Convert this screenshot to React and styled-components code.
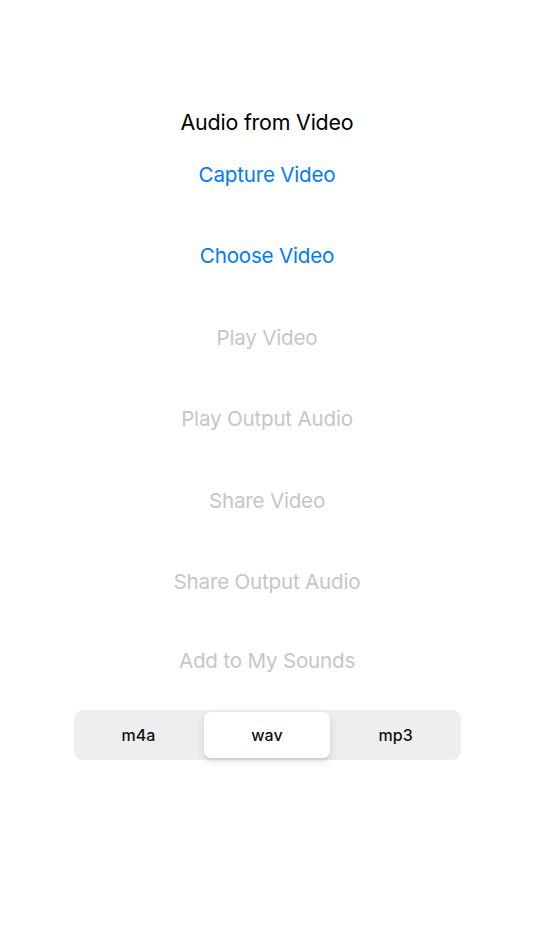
import { useState } from "react";
import styled, { createGlobalStyle } from "styled-components";

const GlobalStyle = createGlobalStyle`
  body {
    margin: 0;
    background: #ffffff;
    font-family: Inter, "Liberation Sans", sans-serif;
    -webkit-font-smoothing: antialiased;
  }
`;

const Screen = styled.div`
  width: 534px;
  height: 950px;
  display: flex;
  flex-direction: column;
  align-items: center;
  padding-top: 109px;
  box-sizing: border-box;
`;

const Title = styled.h1`
  margin: 0;
  font-size: 21.4px;
  line-height: 26px;
  font-weight: 400;
  color: #000000;
  letter-spacing: -0.2px;
`;

const ButtonList = styled.div`
  display: flex;
  flex-direction: column;
  align-items: center;
  gap: 37.5px;
  margin-top: 17px;
`;

const ActionButton = styled.button`
  height: 44px;
  border: none;
  background: none;
  padding: 0 8px;
  font-family: inherit;
  font-size: 20.6px;
  font-weight: 400;
  letter-spacing: -0.2px;
  color: ${(p) => (p.disabled ? "#c6c6c8" : "#007aff")};
  margin-top: ${(p) => (p.$tight ? "-3px" : "0")};
  cursor: ${(p) => (p.disabled ? "default" : "pointer")};
`;

const Segmented = styled.div`
  margin-top: 28px;
  width: 387px;
  height: 50px;
  box-sizing: border-box;
  padding: 2px;
  display: grid;
  grid-template-columns: repeat(3, 1fr);
  gap: 3px;
  background: #eeeeef;
  border-radius: 9px;
`;

const Segment = styled.button`
  border: none;
  border-radius: 7px;
  font-family: inherit;
  font-size: 16px;
  font-weight: 500;
  color: #111111;
  background: ${(p) => (p.$active ? "#ffffff" : "transparent")};
  box-shadow: ${(p) =>
    p.$active ? "0 3px 8px rgba(0,0,0,0.12), 0 3px 1px rgba(0,0,0,0.04)" : "none"};
  cursor: pointer;
`;

const actions = [
  { label: "Capture Video", enabled: true },
  { label: "Choose Video", enabled: true },
  { label: "Play Video" },
  { label: "Play Output Audio" },
  { label: "Share Video" },
  { label: "Share Output Audio" },
  { label: "Add to My Sounds", tight: true },
];

const formats = ["m4a", "wav", "mp3"];

export default function App() {
  const [format, setFormat] = useState("wav");
  return (
    <>
      <GlobalStyle />
      <Screen>
        <Title>Audio from Video</Title>
        <ButtonList>
          {actions.map((a) => (
            <ActionButton key={a.label} disabled={!a.enabled} $tight={a.tight}>
              {a.label}
            </ActionButton>
          ))}
        </ButtonList>
        <Segmented>
          {formats.map((f) => (
            <Segment key={f} $active={f === format} onClick={() => setFormat(f)}>
              {f}
            </Segment>
          ))}
        </Segmented>
      </Screen>
    </>
  );
}
